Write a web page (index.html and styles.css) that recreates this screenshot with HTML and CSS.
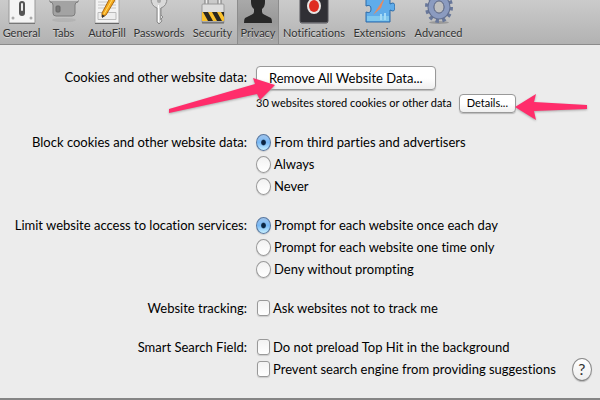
FILE: index.html
```html
<!DOCTYPE html>
<html lang="en">
<head>
<meta charset="UTF-8">
<title>Privacy</title>
<link rel="stylesheet" href="styles.css">
</head>
<body>

<nav class="toolbar">
  <a href="#general" class="tab">
    <svg viewBox="0 0 30 24"><rect x="2" y="-6" width="26" height="29" rx="1" fill="#f4f4f4" stroke="#999"/><path d="M2 23.5h26" stroke="#777"/><rect x="12" y="1" width="6" height="15" rx="3" fill="#555"/><rect x="14" y="3" width="2" height="8" rx="1" fill="#eee"/><circle cx="6" cy="18" r="1.5" fill="#aaa"/><circle cx="24" cy="18" r="1.5" fill="#aaa"/></svg>
    General
  </a>
  <a href="#tabs" class="tab">
    <svg viewBox="0 0 30 24"><path d="M1-2h28v4q-3 0-3 3v8q0 3-3 3H7q-3 0-3-3V5q0-3-3-3z" fill="#a3a3a3" stroke="#7d7d7d"/><path d="M1 .5h28" stroke="#d0d0d0"/><rect x="7" y="6" width="4" height="6" rx="1" fill="#777" stroke="#666"/><ellipse cx="15" cy="20" rx="12" ry="2" fill="#a8a8a8" opacity=".5"/></svg>
    Tabs
  </a>
  <a href="#autofill" class="tab">
    <svg viewBox="0 0 30 24"><rect x="3" y="-4" width="24" height="27" fill="#f3f3f3" stroke="#aaa"/><path d="M3 23.5h24" stroke="#666"/><path d="M6 2h18M6 5h18M6 8h18" stroke="#c6c6c6"/><path d="M6 12.500h18v7H6z" fill="#eee" stroke="#bbb"/><path d="M18-2l5 2-9 15-4 2v-4z" fill="#f5a91d" stroke="#a96a15"/><path d="M20 0l-8 14" stroke="#ffdc68"/><path d="M10 14.500V18l3-2z" fill="#333"/></svg>
    AutoFill
  </a>
  <a href="#passwords" class="tab">
    <svg viewBox="0 0 30 24"><path d="M7-2q0 8 6 10v14l2 2 3-3-1-2 2-2-2-2V8q6-2 6-10z" fill="#d9d9d9" stroke="#8b8b8b"/><path d="M14.500 5v17" stroke="#fff"/><path d="M16.500 8v12" stroke="#999"/><circle cx="15" cy="1" r="2" fill="#aaa"/></svg>
    Passwords
  </a>
  <a href="#security" class="tab">
    <svg viewBox="0 0 30 24"><path d="M8.500 5v-8M21.500 5v-8" stroke="#777" stroke-width="4"/><path d="M8.500 5v-8M21.500 5v-8" stroke="#eee" stroke-width="2"/><rect x="4" y="4" width="22" height="19" rx="1" fill="#ddd" stroke="#999"/><path d="M4 12h22v9H4z" fill="#fac12e"/><path d="M5 12h5l5 9h-5zM14 12h5l5 9h-5zM23 12h3v5z" fill="#292722"/><path d="M4 22.500h22" stroke="#777" stroke-width="2"/></svg>
    Security
  </a>
  <a href="#privacy" class="tab selected">
    <svg viewBox="0 0 30 24"><path d="M8-4h14v6q0 5-3 7v3q0 2 3 3l6 3q1 1 1 5H1q0-4 1-5l6-3q3-1 3-3V9Q8 7 8 2z" fill="#272727"/></svg>
    Privacy
  </a>
  <a href="#notifications" class="tab">
    <svg viewBox="0 0 30 24"><rect x="1" y="-6" width="28" height="29" rx="2" fill="#303035" stroke="#55555a"/><ellipse cx="15" cy="6" rx="7" ry="8" fill="#e8e4e2"/><ellipse cx="15" cy="6" rx="5" ry="6" fill="#df2c20"/><path d="M2 23h26" stroke="#85858a"/></svg>
    Notifications
  </a>
  <a href="#extensions" class="tab">
    <svg viewBox="0 0 30 24"><path d="M1-3h24v7q5-3 5 3t-5 3v12H1V12q5 2 5-3T1 6z" fill="#5facea" stroke="#2c6ba8"/><path d="M2 16h22v5H2z" fill="#80c7ed"/><path d="M16 14v6M20 13v7" stroke="#a3daf7" stroke-width="2"/><path d="M20-3L8 15l6-9z" fill="#fff"/><path d="M20-3l-4 11-8 7z" fill="#e58a60"/></svg>
    Extensions
  </a>
  <a href="#advanced" class="tab">
    <svg viewBox="0 0 30 24"><ellipse cx="15" cy="22.500" rx="10" ry="1.500" fill="#999"/><ellipse cx="15" cy="7" rx="12" ry="14" fill="none" stroke="#68779a" stroke-width="4" stroke-dasharray="3.400 3.400"/><ellipse cx="15" cy="7" rx="8" ry="9" fill="none" stroke="#63708f" stroke-width="7"/><ellipse cx="15" cy="7" rx="8" ry="9" fill="none" stroke="#8b9bc0" stroke-width="5"/><ellipse cx="15" cy="7" rx="5" ry="6" fill="#c0c0c0" stroke="#66718e"/></svg>
    Advanced
  </a>
</nav>

<form class="prefs">
  <div class="group">
    <span class="caption">Cookies and other website data:</span>
    <div class="options">
      <div class="remove">
        <button type="button" class="push">Remove All Website Data...</button>
        <svg class="arrow arrow-remove" viewBox="0 0 108 38"><path d="M1 33L87 8 85 2l22 7-15 15-3-6L1 37z" fill="#ff2d6b"/></svg>
      </div>
      <div class="stored">
        <span>30 websites stored cookies or other data</span>
        <div class="details">
          <button type="button" class="push small">Details...</button>
          <svg class="arrow arrow-details" viewBox="0 0 74 30"><path d="M1 15L22 2l-2 8 53 3v4l-53 2 2 9z" fill="#ff2d6b"/></svg>
        </div>
      </div>
    </div>
  </div>

  <div class="group" role="radiogroup" aria-labelledby="block">
    <span class="caption" id="block">Block cookies and other website data:</span>
    <div class="options">
      <label><input type="radio" name="block" checked>From third parties and advertisers</label>
      <label><input type="radio" name="block">Always</label>
      <label><input type="radio" name="block">Never</label>
    </div>
  </div>

  <div class="group" role="radiogroup" aria-labelledby="location">
    <span class="caption" id="location">Limit website access to location services:</span>
    <div class="options">
      <label><input type="radio" name="location" checked>Prompt for each website once each day</label>
      <label><input type="radio" name="location">Prompt for each website one time only</label>
      <label><input type="radio" name="location">Deny without prompting</label>
    </div>
  </div>

  <div class="group">
    <span class="caption">Website tracking:</span>
    <div class="options">
      <label><input type="checkbox">Ask websites not to track me</label>
    </div>
  </div>

  <div class="group">
    <span class="caption">Smart Search Field:</span>
    <div class="options">
      <label><input type="checkbox">Do not preload Top Hit in the background</label>
      <div class="last">
        <label><input type="checkbox">Prevent search engine from providing suggestions</label>
        <button type="button" class="help">?</button>
      </div>
    </div>
  </div>
</form>

</body>
</html>
```

FILE: styles.css
```css
* { box-sizing: border-box; }
body {
  margin: 0;
  min-height: 100vh;
  display: flex;
  flex-direction: column;
  background: #ececec;
  border-bottom: 2px solid #858585;
  font-family: Lato, "Liberation Sans", sans-serif;
  font-size: 13px;
  font-variant-ligatures: none;
  line-height: 22px;
  color: #000;
}

.toolbar {
  display: grid;
  grid-template-columns: 43px 41px 46px 58px 49px 42px 70px 61px 57px;
  background: linear-gradient(#cbcbcb, #b2b2b2);
  border-bottom: 1px solid #8b8b8b;
}
.tab {
  display: flex;
  flex-direction: column;
  align-items: center;
  padding-bottom: 3px;
  font-size: 11px;
  line-height: 17px;
  color: #333;
  text-decoration: none;
  text-shadow: 0 1px 0 #d8d8d8;
}
.tab svg { width: 30px; height: 24px; }
.selected {
  background: linear-gradient(#a9a9a9, #999 50%, #a8a8a8);
  border-left: 1px solid #8c8c8c;
  border-right: 1px solid #8c8c8c;
}

.prefs {
  display: flex;
  flex-direction: column;
  gap: 17px;
  padding-top: 21px;
}
.group { display: grid; grid-template-columns: 247px 1fr; column-gap: 9px; }
.caption { text-align: right; white-space: nowrap; }
.options { white-space: nowrap; }
.options label { display: flex; align-items: center; }

input {
  appearance: none;
  width: 15px;
  height: 17px;
  margin: 0 3px 0 0;
  border: 1px solid #999;
  background: linear-gradient(#f2f2f2, #fff);
  box-shadow: 0 1px 1px #ccc;
}
input[type="radio"] { border-radius: 50%; }
input[type="checkbox"] { width: 13px; height: 16px; margin: 0 3px 0 1px; border-radius: 3px; }
input[type="radio"]:checked {
  border-color: #58779f;
  background: radial-gradient(ellipse, #0b2542 20%, transparent 32%), linear-gradient(#9fc4ec, #77b8f5 50%, #c8f0ff);
}

.push {
  display: block;
  height: 24px;
  padding: 0 12px;
  border: 1px solid #999;
  border-radius: 4px;
  background: linear-gradient(#fff, #fff 50%, #efefef);
  box-shadow: 0 1px 1px #bbb;
  font: inherit;
  line-height: 20px;
  color: #000;
}
.small { height: 19px; padding: 0 7px; font-size: 11px; line-height: 16px; }
.stored { display: flex; align-items: center; gap: 7px; padding-top: 2px; font-size: 11px; }
.remove, .details { position: relative; width: max-content; }

/* callouts lie over the buttons */
.arrow { position: absolute; filter: drop-shadow(0 1px 1px #aaa); }
.arrow-remove { left: -88px; top: 10px; width: 108px; height: 38px; }
.arrow-details { right: -72px; top: -2px; width: 74px; height: 30px; }

.last { display: flex; align-items: center; gap: 16px; height: 22px; }
.help {
  width: 20px;
  height: 23px;
  padding: 0;
  border: 1px solid #888;
  border-radius: 50%;
  background: linear-gradient(#fff, #eee);
  box-shadow: 0 1px 1px #bbb;
  font: inherit;
  font-size: 16px;
  line-height: 20px;
  color: #333;
}
```
